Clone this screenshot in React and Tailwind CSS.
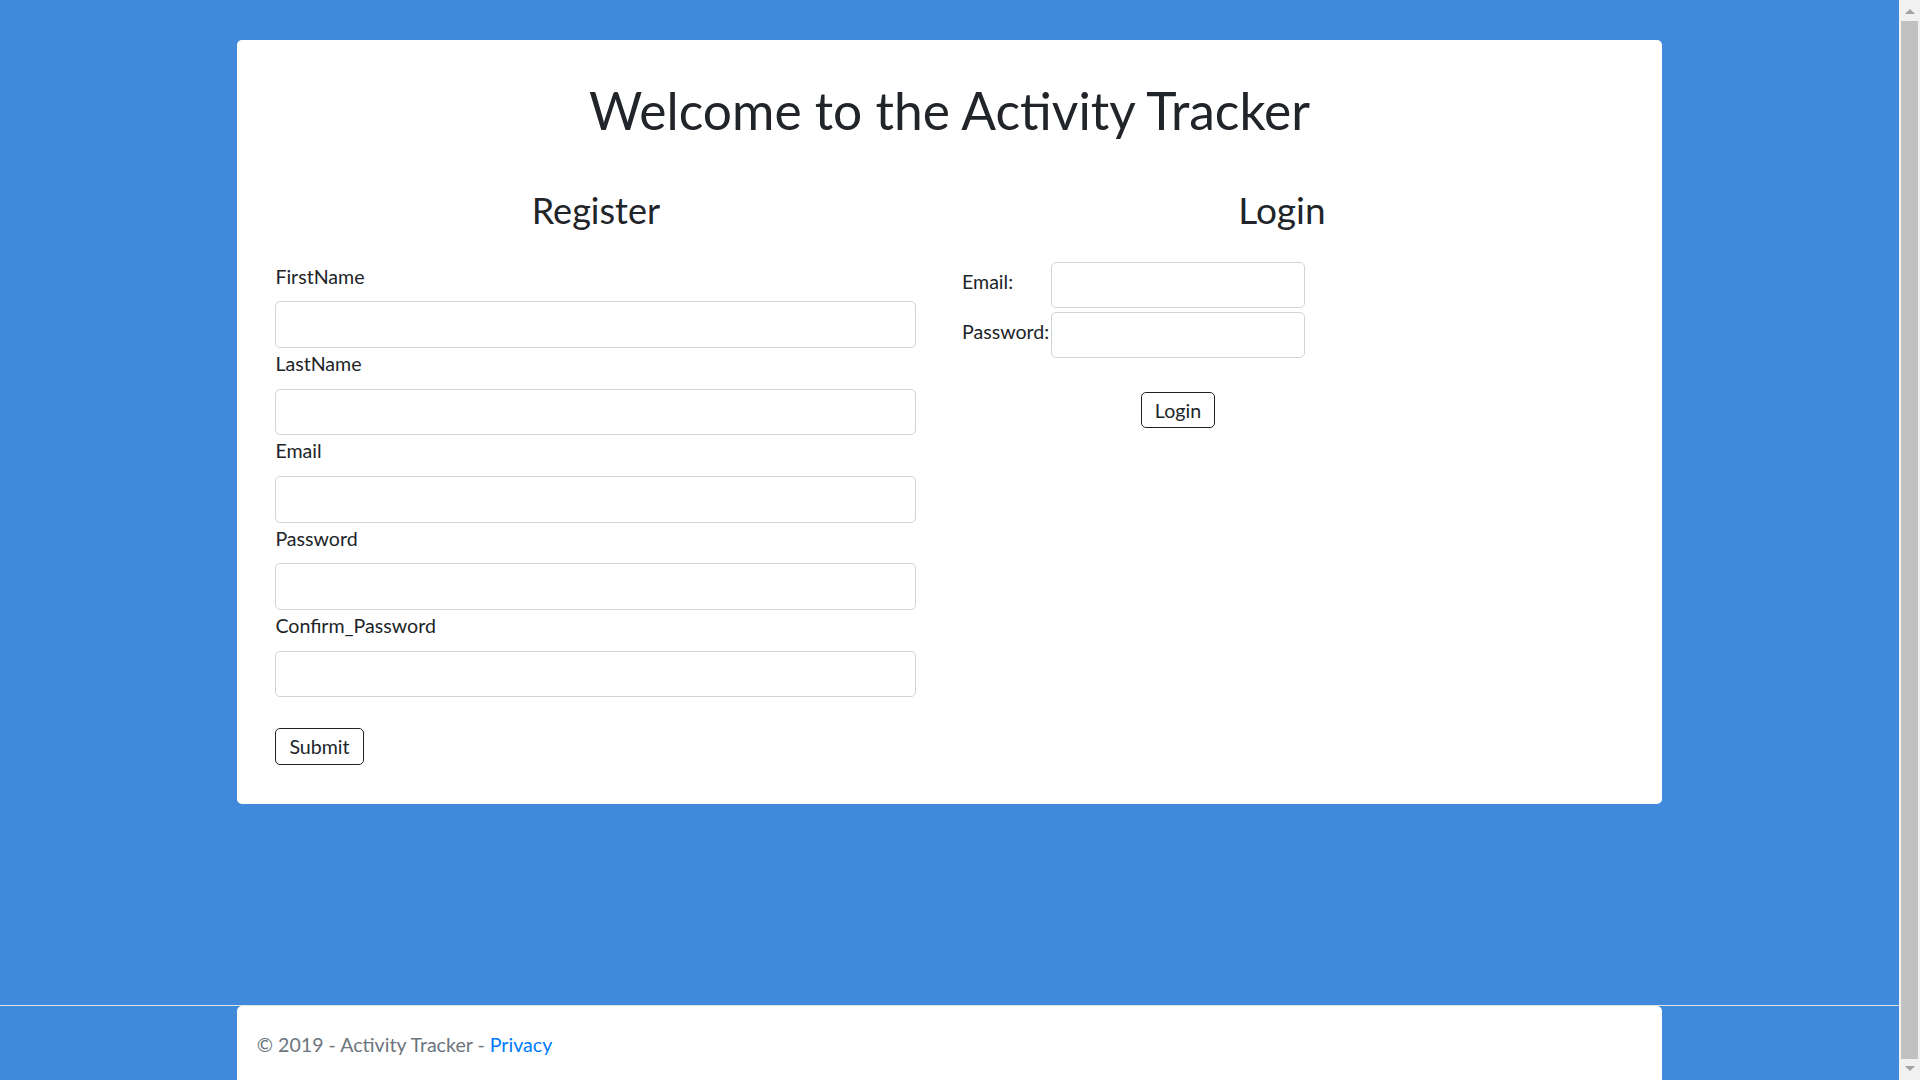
import React from "react";

const registerFields = ["LastName", "Email", "Password", "Confirm_Password"];

function Field({ label }) {
    return (
        <>
            <label className="mt-[1.4px] mb-[10.2px] block h-[29.4px] leading-[29.4px]">{label}</label>
            <input type="text" className="block h-[46.5px] w-full rounded-[5px] border border-[#ced4da] bg-white outline-none" />
        </>
    );
}

// browser scrollbar as seen in the screenshot
function Scrollbar() {
    return (
        <div className="flex h-screen w-[21px] shrink-0 flex-col bg-[#f1f1f1]">
            <div className="flex h-[20px] items-start justify-center pt-[9px]">
                <svg width="10" height="5" viewBox="0 0 10 5"><polygon points="0,5 5,0 10,5" fill="#a3a3a3" /></svg>
            </div>
            <div className="mx-[2px] my-[1px] flex-1 bg-[#c1c1c1]" />
            <div className="flex h-[20px] items-start justify-center pt-[6px]">
                <svg width="10" height="5" viewBox="0 0 10 5"><polygon points="0,0 10,0 5,5" fill="#a3a3a3" /></svg>
            </div>
        </div>
    );
}

export default function App() {
    return (
        <div className="flex h-screen overflow-hidden bg-[#4189da] font-['Lato','Segoe_UI',sans-serif] text-[19.6px] text-[#212529]">
            <div className="h-screen flex-1 overflow-hidden">
                <main className="mx-auto mt-[40.4px] w-3/4 rounded-[5px] bg-white pt-[38px] pb-[39.2px]">
                    <h1 className="h-[64px] text-center text-[51.5px] leading-[64px]">Welcome to the Activity Tracker</h1>

                    <div className="mt-[45.6px] flex gap-[45.6px] pl-[38px]">
                        {/* register */}
                        <div className="w-[641px]">
                            <h2 className="h-[44px] text-center text-[36px] leading-[44px]">Register</h2>
                            <label className="mt-[29.6px] mb-[10.1px] block h-[29.4px] leading-[29.4px]">FirstName</label>
                            <input type="text" className="block h-[46.5px] w-full rounded-[5px] border border-[#ced4da] bg-white outline-none" />
                            {registerFields.map((f) => (
                                <Field label={f} key={f} />
                            ))}
                            <button className="mt-[30.9px] h-[36.7px] rounded-[5px] border border-[#222] bg-white px-[13px] leading-[29px]">Submit</button>
                        </div>

                        {/* login */}
                        <div className="w-[640px]">
                            <h2 className="h-[44px] text-center text-[37px] leading-[44px]">Login</h2>
                            <div className="mt-[29.9px] grid grid-cols-[89px_254px] gap-y-[3.6px]">
                                <span className="pt-[5px] leading-[29.4px]">Email:</span>
                                <input type="text" className="h-[46.5px] w-full rounded-[5px] border border-[#ced4da] bg-white outline-none" />
                                <span className="pt-[5px] leading-[29.4px]">Password:</span>
                                <input type="password" className="h-[46.5px] w-full rounded-[5px] border border-[#ced4da] bg-white outline-none" />
                                <div />
                                <button className="mt-[29.6px] h-[36.7px] justify-self-center rounded-[5px] border border-[#222] bg-white px-[13px] leading-[29px]">Login</button>
                            </div>
                        </div>
                    </div>
                </main>

                <footer className="mt-[200.5px] border-t border-[#dee2e6]">
                    <div className="mx-auto h-[82px] w-3/4 rounded-t-[5px] bg-white pt-[2px] pl-[19.4px] leading-[73.5px] text-[#6c757d]">
                        © 2019 - Activity Tracker - <a href="#" className="text-[#007bff]">Privacy</a>
                    </div>
                </footer>
            </div>
            <Scrollbar />
        </div>
    );
}
